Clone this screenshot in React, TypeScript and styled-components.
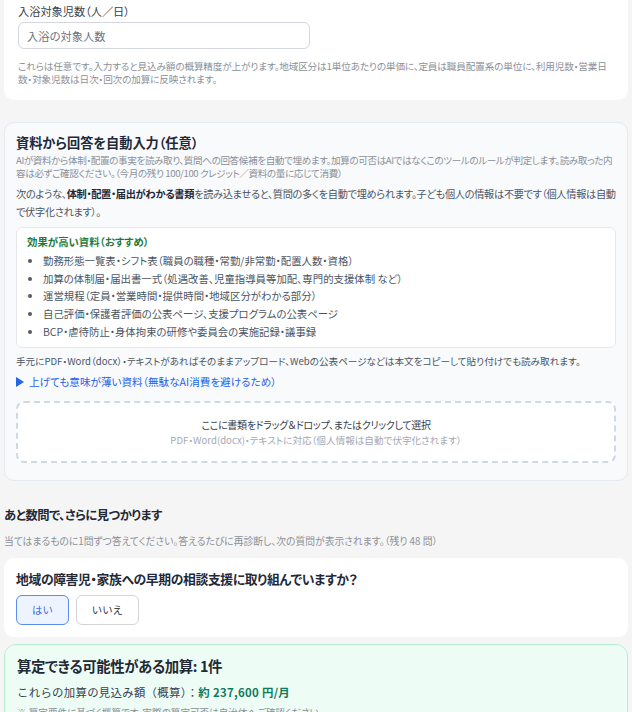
import { FC } from 'react';
import styled, { createGlobalStyle } from 'styled-components';

const GlobalStyle = createGlobalStyle`
  * {
    box-sizing: border-box;
  }

  html,
  body {
    margin: 0;
    padding: 0;
    background: #f5f5f5;
  }

  body {
    font-family: 'Noto Sans CJK JP', 'Noto Sans', sans-serif;
    font-feature-settings: 'palt';
    color: #1f2937;
    overflow: hidden;
  }
`;

const Page = styled.div`
  display: flex;
  flex-direction: column;
  padding: 0 4px;
`;

const SettingsCard = styled.section`
  margin-top: -10px;
  padding: 14px 14px 14px;
  background: #ffffff;
  border-radius: 10px;
`;

const FieldLabel = styled.label`
  display: block;
  margin-bottom: 4px;
  font-size: 11.2px;
  line-height: 14px;
  color: #374151;
`;

const TextInput = styled.input`
  display: block;
  width: 292px;
  height: 27px;
  padding: 0 8px;
  border: 1px solid #d4d7dd;
  border-radius: 6px;
  font-family: inherit;
  font-size: 11.2px;
  color: #1f2937;
  background: #ffffff;

  &::placeholder {
    color: #6b7280;
  }
`;

const Hint = styled.p`
  margin: 11px 0 0;
  font-size: 9.6px;
  line-height: 13px;
  letter-spacing: -0.12px;
  color: #8b9099;
`;

const AutoFillCard = styled.section`
  margin-top: 22px;
  padding: 11px 11px 17px;
  background: #f8fafc;
  border: 1px solid #e5e9f0;
  border-radius: 10px;
`;

const CardTitle = styled.h2`
  margin: 0;
  font-size: 13.2px;
  line-height: 18px;
  font-weight: 700;
  color: #1f2937;
`;

const Muted = styled.p`
  margin: 2px 0 0;
  font-size: 9.6px;
  line-height: 13px;
  letter-spacing: -0.4px;
  color: #8b9099;
`;

const Lead = styled.p`
  margin: 5px 0 0;
  font-size: 10.2px;
  line-height: 18px;
  letter-spacing: -0.3px;
  color: #4b5563;

  strong {
    font-weight: 700;
    color: #1f2937;
  }
`;

const TipBox = styled.div`
  margin-top: 6px;
  padding: 7px 10px 6px;
  background: #ffffff;
  border: 1px solid #e5e7eb;
  border-radius: 6px;
`;

const TipTitle = styled.p`
  margin: 0 0 3px;
  font-size: 10.4px;
  line-height: 14px;
  font-weight: 700;
  color: #1f7a3a;
`;

const TipList = styled.ul`
  margin: 0;
  padding-left: 16px;
  list-style: disc;

  li {
    font-size: 10.4px;
    line-height: 17.7px;
    color: #4b5563;
  }

  li::marker {
    color: #555b66;
  }
`;

const Note = styled.p`
  margin: 6px 0 0;
  font-size: 9.6px;
  line-height: 14px;
  color: #4b5563;
`;

const Disclosure = styled.div`
  display: flex;
  align-items: center;
  gap: 5px;
  margin-top: 7px;
  font-size: 10.6px;
  line-height: 14px;
  color: #2563eb;
  cursor: pointer;
`;

const Triangle = styled.span`
  width: 0;
  height: 0;
  border-left: 8px solid #2563eb;
  border-top: 5px solid transparent;
  border-bottom: 5px solid transparent;
`;

const DropZone = styled.div`
  display: flex;
  flex-direction: column;
  align-items: center;
  justify-content: center;
  gap: 2px;
  height: 62px;
  margin-top: 12px;
  background: #ffffff;
  border: 2px dashed #cfd8e3;
  border-radius: 8px;
  cursor: pointer;
`;

const DropMain = styled.span`
  font-size: 10px;
  line-height: 15px;
  letter-spacing: -0.3px;
  color: #374151;
`;

const DropSub = styled.span`
  font-size: 9.6px;
  line-height: 13px;
  color: #a3a9b3;
`;

const SectionHeading = styled.h3`
  margin: 25px 0 0;
  font-size: 12.3px;
  line-height: 18px;
  font-weight: 700;
  letter-spacing: -0.5px;
  color: #1f2937;
`;

const SectionNote = styled.p`
  margin: 11px 0 0;
  font-size: 9.8px;
  line-height: 13px;
  color: #8b9099;
`;

const QuestionCard = styled.section`
  margin-top: 10px;
  padding: 12px;
  background: #ffffff;
  border-radius: 10px;
`;

const QuestionText = styled.p`
  margin: 0;
  font-size: 12.8px;
  line-height: 18px;
  font-weight: 700;
  letter-spacing: -0.35px;
  color: #1f2937;
`;

const Choices = styled.div`
  display: flex;
  gap: 7px;
  margin-top: 7px;
`;

const ChoiceButton = styled.button<{ $selected?: boolean }>`
  height: 30px;
  padding: 0 15px;
  border-radius: 6px;
  border: 1px solid ${({ $selected }) => ($selected ? '#5b8def' : '#d4d4d8')};
  background: ${({ $selected }) => ($selected ? '#eef4ff' : '#ffffff')};
  color: ${({ $selected }) => ($selected ? '#3b6fdc' : '#333842')};
  font-family: inherit;
  font-size: 10.4px;
  cursor: pointer;
`;

const ResultCard = styled.section`
  margin-top: 7px;
  padding: 11px 12px 20px;
  background: #edfdf5;
  border: 1px solid #b5efd2;
  border-radius: 12px;
`;

const ResultTitle = styled.h2`
  margin: 0;
  font-size: 14.4px;
  line-height: 20px;
  font-weight: 700;
  letter-spacing: -0.4px;
  color: #1f2937;
`;

const ResultAmount = styled.p`
  margin: 8px 0 0;
  font-size: 11.4px;
  line-height: 16px;
  letter-spacing: 0.3px;
  font-feature-settings: normal;
  color: #374151;
`;

const Amount = styled.span`
  font-weight: 600;
  color: #0f7a5c;
`;

const ResultNote = styled.p`
  margin: 6px 0 0;
  font-size: 9.6px;
  line-height: 13px;
  color: #8b9099;
`;

const recommended = [
  '勤務形態一覧表・シフト表（職員の職種・常勤/非常勤・配置人数・資格）',
  '加算の体制届・届出書一式（処遇改善、児童指導員等加配、専門的支援体制 など）',
  '運営規程（定員・営業時間・提供時間・地域区分がわかる部分）',
  '自己評価・保護者評価の公表ページ、支援プログラムの公表ページ',
  'BCP・虐待防止・身体拘束の研修や委員会の実施記録・議事録',
];

const App: FC = () => {
  return (
    <>
      <GlobalStyle />
      <Page>
        <SettingsCard>
          <FieldLabel htmlFor="bath">入浴対象児数（人／日）</FieldLabel>
          <TextInput id="bath" placeholder="入浴の対象人数" />
          <Hint>
            これらは任意です。入力すると見込み額の概算精度が上がります。地域区分は1単位あたりの単価に、定員は職員配置系の単位に、利用児数・営業日数・対象児数は日次・回次の加算に反映されます。
          </Hint>
        </SettingsCard>

        <AutoFillCard>
          <CardTitle>資料から回答を自動入力（任意）</CardTitle>
          <Muted>
            AIが資料から体制・配置の事実を読み取り、質問への回答候補を自動で埋めます。加算の可否はAIではなくこのツールのルールが判定します。読み取った内容は必ずご確認ください。（今月の残り 100/100 クレジット／資料の量に応じて消費）
          </Muted>
          <Lead>
            次のような、<strong>体制・配置・届出がわかる書類</strong>
            を読み込ませると、質問の多くを自動で埋められます。子ども個人の情報は不要です（個人情報は自動で伏字化されます）。
          </Lead>
          <TipBox>
            <TipTitle>効果が高い資料（おすすめ）</TipTitle>
            <TipList>
              {recommended.map((item) => (
                <li key={item}>{item}</li>
              ))}
            </TipList>
          </TipBox>
          <Note>
            手元にPDF・Word（docx）・テキストがあればそのままアップロード、Webの公表ページなどは本文をコピーして貼り付けでも読み取れます。
          </Note>
          <Disclosure>
            <Triangle />
            上げても意味が薄い資料（無駄なAI消費を避けるため）
          </Disclosure>
          <DropZone>
            <DropMain>ここに書類をドラッグ＆ドロップ、またはクリックして選択</DropMain>
            <DropSub>PDF・Word(docx)・テキストに対応（個人情報は自動で伏字化されます）</DropSub>
          </DropZone>
        </AutoFillCard>

        <SectionHeading>あと数問で、さらに見つかります</SectionHeading>
        <SectionNote>
          当てはまるものに1問ずつ答えてください。答えるたびに再診断し、次の質問が表示されます。（残り 48 問）
        </SectionNote>

        <QuestionCard>
          <QuestionText>地域の障害児・家族への早期の相談支援に取り組んでいますか？</QuestionText>
          <Choices>
            <ChoiceButton $selected>はい</ChoiceButton>
            <ChoiceButton>いいえ</ChoiceButton>
          </Choices>
        </QuestionCard>

        <ResultCard>
          <ResultTitle>算定できる可能性がある加算: 1件</ResultTitle>
          <ResultAmount>
            これらの加算の見込み額（概算）：<Amount>約 237,600 円/月</Amount>
          </ResultAmount>
          <ResultNote>
            ※ 算定要件に基づく概算です。実際の算定可否は自治体へご確認ください。
          </ResultNote>
        </ResultCard>
      </Page>
    </>
  );
};

export default App;
